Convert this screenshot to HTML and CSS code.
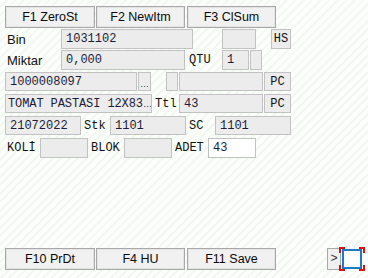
FILE: index.html
```html
<!DOCTYPE html>
<html>
<head>
<meta charset="utf-8">
<link rel="stylesheet" href="styles.css">
</head>
<body>
<div class="screen">
  <div class="toolbar">
    <div class="btn w90">F1 ZeroSt</div>
    <div class="btn w89 g1">F2 NewItm</div>
    <div class="btn w89 g2">F3 ClSum</div>
  </div>

  <div class="row r1">
    <div class="lbl sans w56">Bin</div>
    <div class="fld w132">1031102</div>
    <div class="fld w34 ml29"></div>
    <div class="fld w20 ml15 ctr">HS</div>
  </div>

  <div class="row r2">
    <div class="lbl sans w56">Miktar</div>
    <div class="fld w124">0,000</div>
    <div class="lbl mono w37 pl4">QTU</div>
    <div class="fld w27">1</div>
    <div class="fld w12 ml1"></div>
  </div>

  <div class="row r3">
    <div class="fld w132">1000008097</div>
    <div class="fld w13 ml1 dots">…</div>
    <div class="fld w12 ml15"></div>
    <div class="fld w84 ml1"></div>
    <div class="fld w27 ml1 ctr">PC</div>
  </div>

  <div class="row r4">
    <div class="fld w147 tight">TOMAT PASTASI 12X83<span class="el">…</span></div>
    <div class="lbl mono w32 pl3">Ttl</div>
    <div class="fld w84">43</div>
    <div class="fld w27 ml1 ctr">PC</div>
  </div>

  <div class="row r5">
    <div class="fld w76">21072022</div>
    <div class="lbl mono w29 pl3">Stk</div>
    <div class="fld w76">1101</div>
    <div class="lbl mono w29 pl3">SC</div>
    <div class="fld w76">1101</div>
  </div>

  <div class="row r6">
    <div class="lbl mono w35 pl2">KOLİ</div>
    <div class="fld w48"></div>
    <div class="lbl mono w36 pl3">BLOK</div>
    <div class="fld w48"></div>
    <div class="lbl mono w36 pl3">ADET</div>
    <div class="fld w48 white">43</div>
  </div>

  <div class="toolbar bottom">
    <div class="btn w90">F10 PrDt</div>
    <div class="btn w89 g1">F4 HU</div>
    <div class="btn w89 g2">F11 Save</div>
    <div class="more">&gt;</div>
    <div class="scan">
      <div class="box"></div>
      <span class="c tl"></span><span class="c tr"></span>
      <span class="c bl"></span><span class="c br"></span>
    </div>
  </div>
</div>
</body>
</html>
```

FILE: styles.css
```css
* { box-sizing: border-box; }
html, body { margin: 0; padding: 0; }
body {
  width: 368px;
  height: 278px;
  overflow: hidden;
  background: repeating-linear-gradient(135deg, #fcfefb 0px, #fcfefb 4px, #f1f8f0 4px, #f1f8f0 6px);
}
.screen {
  height: 278px;
  padding: 6px 0 8px 5px;
  display: flex;
  flex-direction: column;
}
.toolbar { display: flex; height: 22px; }
.toolbar.bottom { margin-top: auto; align-items: center; }
.btn {
  height: 22px;
  border: 1px solid #a8a8a8;
  box-shadow: inset 0 0 0 1px #e4e4e4;
  background: #f1f1f1;
  font-family: "Liberation Sans", Arial, sans-serif;
  font-size: 12.5px;
  color: #0a0a0a;
  display: flex;
  align-items: center;
  justify-content: center;
}
.g1 { margin-left: 1px; }
.g2 { margin-left: 2px; }
.row { display: flex; align-items: center; height: 20px; }
.r1 { margin-top: 1px; }
.r2 { margin-top: 1px; }
.r3 { margin-top: 2px; height: 19px; }
.r4 { margin-top: 3px; height: 19px; }
.r5 { margin-top: 3px; height: 19px; }
.r6 { margin-top: 3px; height: 20px; }
.fld {
  height: 100%;
  background: #ececec;
  border: 1px solid #c2c2c2;
  font-family: "Liberation Mono", "Courier New", monospace;
  font-size: 12px;
  color: #1c1b3a;
  padding-left: 4px;
  display: flex;
  align-items: center;
  white-space: nowrap;
  overflow: hidden;
}
.fld.white { background: #fff; }
.tight { padding-left: 2px; letter-spacing: -0.1px; }
.el { font-family: "Liberation Sans", Arial, sans-serif; font-size: 9px; align-self: flex-end; padding-bottom: 3px; letter-spacing: 0; }
.ctr { justify-content: center; padding-left: 0; color: #111; }
.dots { justify-content: center; align-items: flex-end; padding: 0 0 1px 0; font-family: "Liberation Sans", Arial, sans-serif; font-size: 9px; color: #333; }
.lbl {
  height: 100%;
  display: flex;
  align-items: center;
  font-size: 12px;
  color: #111;
  white-space: nowrap;
}
.sans { font-family: "Liberation Sans", Arial, sans-serif; padding-left: 2px; font-size: 13px; }
.mono { font-family: "Liberation Mono", "Courier New", monospace; }
.pl2 { padding-left: 2px; }
.pl3 { padding-left: 3px; }
.pl4 { padding-left: 4px; }
.ml1 { margin-left: 1px; }
.ml15 { margin-left: 15px; }
.ml29 { margin-left: 29px; }
.w12 { width: 12px; }
.w13 { width: 13px; }
.w20 { width: 20px; }
.w27 { width: 27px; }
.w29 { width: 29px; }
.w32 { width: 27px; }
.w34 { width: 34px; }
.w35 { width: 35px; }
.w36 { width: 36px; }
.w37 { width: 37px; }
.w48 { width: 48px; }
.w56 { width: 56px; }
.w76 { width: 76px; }
.w84 { width: 84px; }
.w89 { width: 89px; }
.w90 { width: 90px; }
.w124 { width: 124px; }
.w132 { width: 132px; }
.w147 { width: 147px; }
.more {
  margin-left: 51px;
  width: 14px;
  height: 22px;
  border: 1px solid #a8a8a8;
  background: #f1f1f1;
  font-family: "Liberation Mono", monospace;
  font-size: 12px;
  color: #333;
  display: flex;
  align-items: center;
  justify-content: center;
}
.scan {
  position: relative;
  width: 26px;
  height: 24px;
  margin-left: -2px;
}
.scan .box {
  position: absolute;
  left: 3px; top: 2px;
  width: 20px; height: 20px;
  border: 2px solid #1d7ac4;
  background: #fff;
}
.scan .c { position: absolute; width: 6px; height: 6px; border: 0 solid #e01010; }
.scan .tl { left: 0; top: 0; border-left-width: 2px; border-top-width: 2px; }
.scan .tr { right: 0; top: 0; border-right-width: 2px; border-top-width: 2px; }
.scan .bl { left: 0; bottom: 0; border-left-width: 2px; border-bottom-width: 2px; }
.scan .br { right: 0; bottom: 0; border-right-width: 2px; border-bottom-width: 2px; }
```
